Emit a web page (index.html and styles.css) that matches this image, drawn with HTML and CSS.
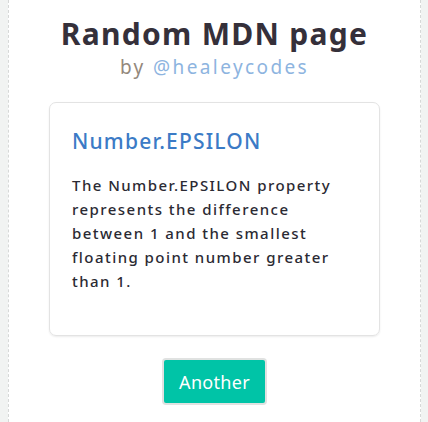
FILE: index.html
```html
<!DOCTYPE html>
<html lang="en">
<head>
<meta charset="utf-8">
<title>Random MDN page</title>
<link rel="stylesheet" href="styles.css">
</head>
<body>
<div class="page">
  <header class="header">
    <h1 class="title">Random MDN page</h1>
    <p class="byline"><span class="by">by</span> <a class="handle" href="#">@healeycodes</a></p>
  </header>
  <main class="card">
    <h2 class="card-title">Number.EPSILON</h2>
    <p class="card-text">The Number.EPSILON property represents the difference between 1 and the smallest floating point number greater than 1.</p>
  </main>
  <div class="actions">
    <button class="btn" type="button">Another</button>
  </div>
</div>
</body>
</html>
```

FILE: styles.css
```css
html, body {
  margin: 0;
  height: 100%;
}
body {
  background: #f1f3f2;
  padding: 0 7px 0 8px;
  box-sizing: border-box;
  font-family: "Noto Sans", "DejaVu Sans", sans-serif;
}
.page {
  background: #fff;
  border-left: 1px dashed #d6d8d7;
  border-right: 1px dashed #d6d8d7;
  min-height: 100%;
  box-sizing: border-box;
  padding-top: 14px;
  display: flex;
  flex-direction: column;
  align-items: center;
}
.header {
  text-align: center;
}
.title {
  margin: 0;
  font-size: 30px;
  line-height: 40px;
  font-weight: 700;
  color: #35303a;
  letter-spacing: 1.3px;
}
.byline {
  margin: 1px 0 0;
  font-size: 19px;
  line-height: 24px;
  letter-spacing: 2.4px;
}
.by {
  color: #93887c;
}
.handle {
  color: #8db4df;
  text-decoration: none;
}
.card {
  margin-top: 23px;
  width: 331px;
  box-sizing: border-box;
  border: 1px solid #e3e3e3;
  border-radius: 7px;
  box-shadow: 0 1px 2px rgba(0,0,0,0.08);
  padding: 23px 22px 42px;
}
.card-title {
  margin: 0;
  font-size: 21px;
  line-height: 30px;
  font-weight: 500;
  color: #3b7bc6;
  letter-spacing: 1.2px;
}
.card-text {
  margin: 17px 0 0;
  font-size: 15px;
  line-height: 24px;
  font-weight: 500;
  color: #2b2a33;
  letter-spacing: 1.45px;
}
.actions {
  margin-top: 22px;
}
.btn {
  font-family: inherit;
  font-size: 18px;
  color: #fff;
  background: #00c4a7;
  border: 2px solid #e0e2e1;
  border-radius: 4px;
  width: 105px;
  height: 47px;
  padding: 0;
  letter-spacing: 0.3px;
  cursor: pointer;
}
```
